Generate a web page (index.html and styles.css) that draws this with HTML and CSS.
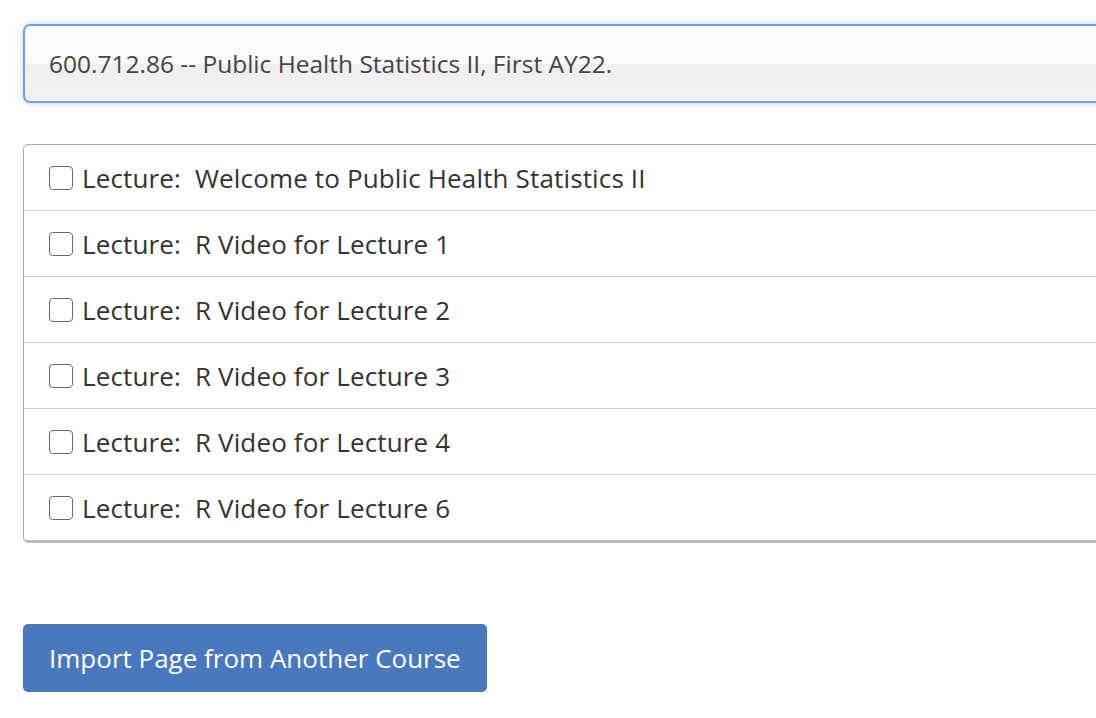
FILE: index.html
```html
<!DOCTYPE html>
<html lang="en">
<head>
    <meta charset="UTF-8">
    <title>Import Pages</title>
    <link rel="stylesheet" href="styles.css">
</head>
<body>

<div class="page">
    <div class="course-select">
        <span>600.712.86 -- Public Health Statistics II, First AY22.</span>
    </div>

    <ul class="page-list">
        <li><label><span class="box"></span>Lecture:&nbsp; Welcome to Public Health Statistics II</label></li>
        <li><label><span class="box"></span>Lecture:&nbsp; R Video for Lecture 1</label></li>
        <li><label><span class="box"></span>Lecture:&nbsp; R Video for Lecture 2</label></li>
        <li><label><span class="box"></span>Lecture:&nbsp; R Video for Lecture 3</label></li>
        <li><label><span class="box"></span>Lecture:&nbsp; R Video for Lecture 4</label></li>
        <li><label><span class="box"></span>Lecture:&nbsp; R Video for Lecture 6</label></li>
    </ul>

    <button class="import-btn">Import Page from Another Course</button>
</div>

</body>
</html>
```

FILE: styles.css
```css
html, body {
    margin: 0;
    padding: 0;
    overflow: hidden;
    background: #fff;
}

body {
    font-family: "Open Sans", Lato, sans-serif;
    color: #333;
}

.page {
    width: 1300px;
    padding: 24px 0 0 23px;
}

.course-select {
    height: 75px;
    border: 2px solid #6d9ef4;
    border-radius: 7px;
    background: linear-gradient(to bottom, #fff 0%, #fbfbfb 50%, #efefef 51%, #f2f2f2 100%);
    box-shadow: 0 0 8px rgba(0, 0, 0, 0.18);
    display: flex;
    align-items: center;
    padding-left: 24px;
    font-size: 24.5px;
    color: #444;
}

.page-list {
    list-style: none;
    margin: 41px 0 0 0;
    padding: 0;
    border: 1px solid #aaa;
    border-bottom: 3px solid #bbb;
    border-radius: 5px;
}

.page-list li {
    height: 65px;
    border-top: 1px solid #ccc;
    display: flex;
    align-items: center;
    padding-left: 25px;
}

.page-list li:first-child {
    border-top: none;
}

.page-list label {
    display: flex;
    align-items: center;
    font-size: 26px;
    letter-spacing: 0.15px;
    color: #333;
}

.box {
    width: 22px;
    height: 22px;
    border: 1.5px solid #6a6a6a;
    border-radius: 4px;
    margin-right: 9px;
    background: #fff;
}

.import-btn {
    margin-top: 81px;
    height: 68px;
    padding: 0 26px;
    border: none;
    border-radius: 5px;
    background: #4a78be;
    color: #fff;
    font-family: inherit;
    font-size: 26px;
}
```
